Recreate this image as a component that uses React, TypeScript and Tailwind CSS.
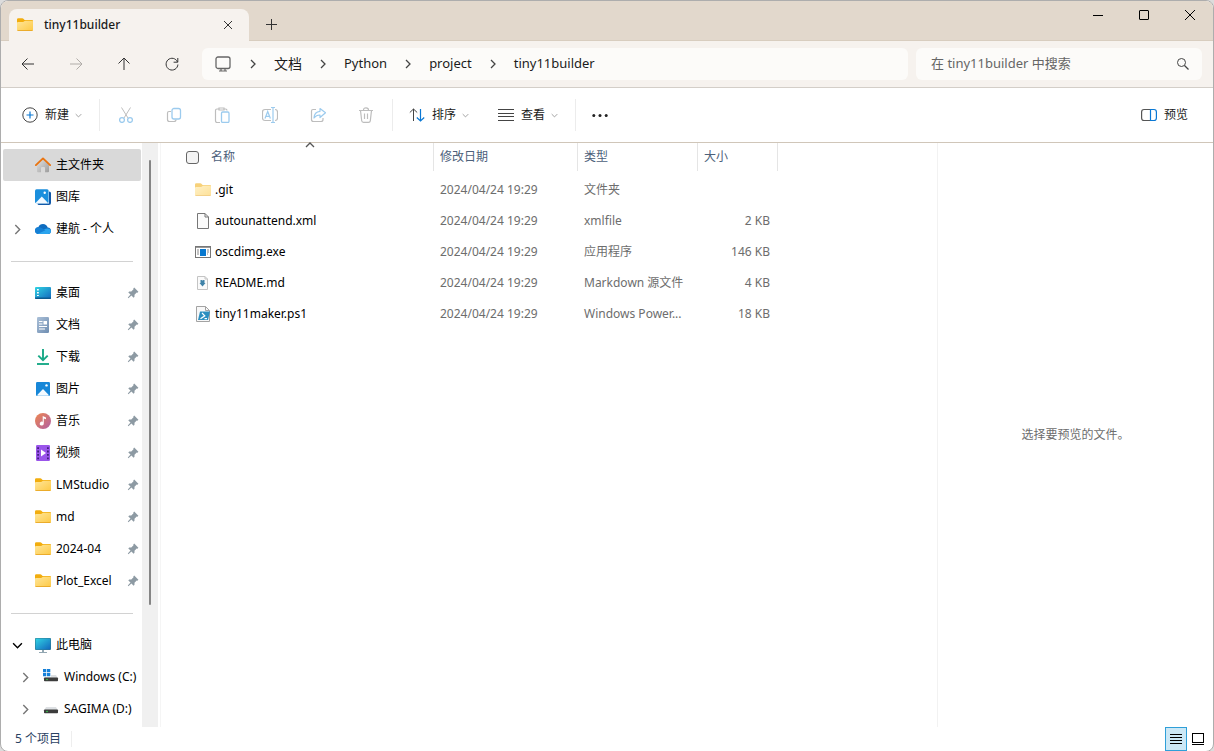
import type { ReactNode } from 'react';
import clsx from 'clsx';

interface IconProps {
  className?: string;
}

function Folder({ className }: IconProps) {
  return (
    <svg width="16" height="16" viewBox="0 0 16 16" className={className} aria-hidden="true">
      <defs>
        <linearGradient id="folderFront" x1="0" y1="0" x2="1" y2="1">
          <stop offset="0" stopColor="#ffe69a" />
          <stop offset="1" stopColor="#fdc945" />
        </linearGradient>
      </defs>
      <path d="M0 2.600Q0 1.300 1.300 1.300H5.400Q6 1.300 6.400 1.700L7.600 3H15Q16 3 16 4V7H0Z" fill="#f2ad0e" />
      <path d="M0 6Q0 5 1 5H6Q6.600 5 7 4.600L7.600 4Q8 3.700 8.500 3.700H15Q16 3.700 16 4.700V13Q16 14 15 14H1Q0 14 0 13Z" fill="url(#folderFront)" />
      <path d="M0.200 13.200Q0.400 14 1.200 14H14.800Q15.600 14 15.800 13.200Z" fill="#e5a01c" />
    </svg>
  );
}

function Home() {
  return (
    <svg width="16" height="16" viewBox="0 0 16 16" aria-hidden="true">
      <defs>
        <linearGradient id="homeWall" x1="0" y1="0" x2="1" y2="1">
          <stop offset="0" stopColor="#e4e4e4" />
          <stop offset="1" stopColor="#9c9c9c" />
        </linearGradient>
      </defs>
      <path d="M2 7.500 8 2 14 7.500V14.300Q14 15.300 13 15.300H10V11Q10 10 9 10H7Q6 10 6 11V15.300H3Q2 15.300 2 14.300Z" fill="url(#homeWall)" />
      <path d="M.9 8.100 8 1.400 15.100 8.100" fill="none" stroke="#ea7410" strokeWidth="1.900" strokeLinecap="round" strokeLinejoin="round" />
    </svg>
  );
}

function Gallery() {
  return (
    <svg width="16" height="16" viewBox="0 0 16 16" aria-hidden="true">
      <path d="M14 2.500Q16 2.500 16 4V14Q16 16 14 16H4Q2.500 16 2.500 14.500H14Z" fill="#1259a8" />
      <rect width="13.600" height="14" y=".3" rx="1.500" fill="#1b8fdd" />
      <path d="M.8 13.800 6.800 7.600 12.800 13.800Q12.500 14.300 12 14.300H1.500Q1 14.300.8 13.800Z" fill="#f2f9ff" />
      <circle cx="9.700" cy="3.800" r="1.200" fill="#fff" />
    </svg>
  );
}

function Cloud() {
  return (
    <svg width="16" height="16" viewBox="0 0 16 16" aria-hidden="true">
      <path d="M3.800 13Q0 13 0 9.600 0 6.500 3.300 6.200 4.600 3 8 3 11.500 3 12.700 6.500 16 6.900 16 9.900 16 13 12.800 13Z" fill="#0f6cbf" />
      <path d="M3.300 13 2.400 12.600 9.500 8.200Q11 7.300 12.600 7.500 15.900 7.900 16 10 15.800 13 12.800 13Z" fill="#2aa4ee" />
      <path d="M3.300 6.200Q5 6 6.500 7L10.500 9.300 2.600 12.900Q0 12.300 0 9.600 0 6.500 3.300 6.200Z" fill="#1580d5" />
    </svg>
  );
}

function Desktop() {
  return (
    <svg width="16" height="16" viewBox="0 0 16 16" aria-hidden="true">
      <defs>
        <linearGradient id="screenFill" x1="0" y1="0" x2="1" y2="1">
          <stop offset="0" stopColor="#31d3e3" />
          <stop offset="1" stopColor="#1267bd" />
        </linearGradient>
      </defs>
      <rect y="2" width="16" height="12" rx="1" fill="url(#screenFill)" />
      <path d="M0 12.500H16V13Q16 14 15 14H1Q0 14 0 13Z" fill="#0c5a8f" />
      <path d="M2 4H3.800V5.500H2ZM2 7H3.800V8.500H2ZM2 10H3.800V11H2Z" fill="#fff" />
    </svg>
  );
}

function DocumentIcon() {
  return (
    <svg width="16" height="16" viewBox="0 0 16 16" aria-hidden="true">
      <defs>
        <linearGradient id="docFill" x1="0" y1="0" x2="1" y2="1">
          <stop offset="0" stopColor="#abc0d8" />
          <stop offset="1" stopColor="#6e8db1" />
        </linearGradient>
      </defs>
      <rect x="2" width="12" height="16" rx="1.300" fill="url(#docFill)" />
      <path d="M4 4.500H7.500M4 7H7.500M4 9.500H12M4 12H10" stroke="#fff" strokeWidth="1.200" />
      <rect x="8.500" y="4" width="3.500" height="3.500" fill="#fff" />
    </svg>
  );
}

function Download() {
  return (
    <svg width="16" height="16" viewBox="0 0 16 16" fill="none" stroke="#19a987" strokeWidth="1.900" aria-hidden="true">
      <path d="M8 0V11M3.300 6.600 8 11.200 12.700 6.600" />
      <path d="M2 15H14" />
    </svg>
  );
}

function Pictures() {
  return (
    <svg width="16" height="16" viewBox="0 0 16 16" aria-hidden="true">
      <rect x="1" y="1" width="14" height="14" rx="1.200" fill="#1787d8" />
      <path d="M2 14.300 8 8 14 14.300Q13.800 14.700 13 14.700H3Q2.200 14.700 2 14.300Z" fill="#f4faff" />
      <circle cx="11.500" cy="4.400" r="1.200" fill="#fff" />
    </svg>
  );
}

function Music() {
  return (
    <svg width="16" height="16" viewBox="0 0 16 16" aria-hidden="true">
      <defs>
        <linearGradient id="musicFill" x1="0" y1="0" x2="1" y2="1">
          <stop offset="0" stopColor="#ee8750" />
          <stop offset="1" stopColor="#b05fa4" />
        </linearGradient>
      </defs>
      <circle cx="8" cy="8" r="8" fill="url(#musicFill)" />
      <path d="M7.700 3 11 4.400V6.300L8.800 5.500V10.600A2 2 0 1 1 7.700 8.800Z" fill="#fff" />
    </svg>
  );
}

function Video() {
  return (
    <svg width="16" height="16" viewBox="0 0 16 16" aria-hidden="true">
      <rect x="1" width="14" height="16" rx="1.200" fill="#9a55ea" />
      <path d="M2.200 2.200H4V4H2.200ZM2.200 5.600H4V7.400H2.200ZM2.200 9H4V10.800H2.200ZM2.200 12.400H4V14.200H2.200ZM12 2.200H13.800V4H12ZM12 5.600H13.800V7.400H12ZM12 9H13.800V10.800H12ZM12 12.400H13.800V14.200H12Z" fill="#41207c" />
      <path d="M6 4.600 11 8 6 11.400Z" fill="#fff" />
    </svg>
  );
}

function ThisPc() {
  return (
    <svg width="16" height="16" viewBox="0 0 16 16" aria-hidden="true">
      <rect y="1" width="16" height="12" rx="1" fill="#2e7890" />
      <rect x=".6" y="1.600" width="14.800" height="10.800" rx=".6" fill="url(#screenFill)" />
      <path d="M7 13H9V15H12V16H4V15H7Z" fill="#93a7b2" />
    </svg>
  );
}

function Drive({ system }: { system?: boolean }) {
  return (
    <svg width="16" height="16" viewBox="0 0 16 16" aria-hidden="true">
      <path d="M3 6H13L15 9.500H1Z" fill="#dde0e3" />
      <rect x="1" y="8.500" width="14" height="3.800" rx=".8" fill="#3c3c3c" />
      <circle cx="4" cy="10.500" r=".8" fill="#36d94a" />
      {system && (
        <>
          <path d="M0 0H8V8H0Z" fill="#fff" />
          <path d="M0 0H3.300V3.300H0ZM4 0H7.300V3.300H4ZM0 4H3.300V7.300H0ZM4 4H7.300V7.300H4Z" fill="#1580d8" />
        </>
      )}
    </svg>
  );
}

function Pin() {
  return (
    <svg width="12" height="12" viewBox="0 0 12 12" aria-hidden="true">
      <path d="M7.200.6 11.400 4.800 10.500 5.700 9.700 5.500 7.500 7.700V9.800L6.600 10.700 4.400 8.500 1.400 11.200.8 10.600 3.500 7.600 1.300 5.400 2.200 4.500H4.300L6.500 2.300 6.300 1.500Z" fill="#8d9aa3" />
    </svg>
  );
}

function XmlFile() {
  return (
    <svg width="16" height="16" viewBox="0 0 16 16" aria-hidden="true">
      <path d="M2.500.5H10L13.500 4V15.500H2.500Z" fill="#fbfbfb" stroke="#777" />
      <path d="M10 .5V4H13.500" fill="none" stroke="#777" />
    </svg>
  );
}

function ExeFile() {
  return (
    <svg width="16" height="16" viewBox="0 0 16 16" aria-hidden="true">
      <rect x=".5" y="2.500" width="15" height="11" fill="#fff" stroke="#777" />
      <path d="M0 3H16" stroke="#777" strokeWidth="1.500" />
      <rect x="5" y="5" width="6" height="7" fill="#0878cf" />
      <path d="M2 6H4M2 8H4M2 10H4M12 6H14M12 8H14M12 10H13" stroke="#888" />
    </svg>
  );
}

function MarkdownFile() {
  return (
    <svg width="16" height="16" viewBox="0 0 16 16" aria-hidden="true">
      <path d="M2.500 1.500H10L12.500 4V14.500H2.500Z" fill="#fafafa" stroke="#c4c4c4" />
      <path d="M10 1.500V4H12.500" fill="none" stroke="#c4c4c4" />
      <path d="M5.500 5H6.500L7.500 5.500 8.500 5H9.500V8H10.500L7.500 11.500 4.500 8H5.500Z" fill="#3f82a8" />
    </svg>
  );
}

function PowerShellFile() {
  return (
    <svg width="16" height="16" viewBox="0 0 16 16" aria-hidden="true">
      <path d="M1.500.5H10.500L14.500 4.500V15.500H1.500Z" fill="#f8f8f8" stroke="#a3a3a3" />
      <path d="M10.500.5V4.500H14.500" fill="none" stroke="#a3a3a3" />
      <path d="M5 5.500H15L13 14H3Z" fill="#2c8fc0" />
      <path d="M7 7 9.800 9.800 5.500 12.800M9.500 12.600H12" fill="none" stroke="#fff" strokeWidth="1.200" />
    </svg>
  );
}

function Chevron({ className, size = 10 }: IconProps & { size?: number }) {
  return (
    <svg width={size} height={size} viewBox="0 0 10 10" fill="none" stroke="currentColor" className={clsx('shrink-0', className)} aria-hidden="true">
      <path d="M3 1 7 5 3 9" strokeWidth="1.300" />
    </svg>
  );
}

// 16px line drawing used by the title bar, the address bar and the toolbar
function Line({ children, className }: IconProps & { children: ReactNode }) {
  return (
    <svg width="16" height="16" viewBox="0 0 16 16" fill="none" stroke="currentColor" className={clsx('shrink-0', className)} aria-hidden="true">
      {children}
    </svg>
  );
}

const GREY = '#bdbdbd';
const BLUE = '#9ccbee';

const navButtons = [
  { label: '后退', icon: <path d="M2 8H14M7.500 2.500 2 8 7.500 13.500" /> },
  { label: '前进', disabled: true, icon: <path d="M2 8H14M8.500 2.500 14 8 8.500 13.500" /> },
  { label: '向上', icon: <path d="M8 2V14M2.500 7.500 8 2 13.500 7.500" /> },
  { label: '刷新', icon: <path d="M13.500 6A5.900 5.900 0 1 0 13.900 8.500M13.800 2V6.200H9.600" /> },
];

const editButtons = [
  {
    label: '剪切',
    icon: (
      <>
        <path d="M3.500.5 10 11M12.500.5 6 11" stroke={GREY} />
        <circle cx="4" cy="13" r="2.400" stroke={BLUE} strokeWidth="1.300" />
        <circle cx="12" cy="13" r="2.400" stroke={BLUE} strokeWidth="1.300" />
      </>
    ),
  },
  {
    label: '复制',
    icon: (
      <>
        <path d="M5 4.500H3Q1.500 4.500 1.500 6V12.500Q1.500 14.500 3.500 14.500H8Q10 14.500 10 12.500" stroke={GREY} strokeWidth="1.200" />
        <rect x="6" y="1.500" width="8.500" height="10.500" rx="2" stroke={BLUE} strokeWidth="1.300" />
      </>
    ),
  },
  {
    label: '粘贴',
    icon: (
      <>
        <path d="M5 2H3Q1.500 2 1.500 3.500V13.500Q1.500 15.500 3 15.500H6M10 2H11.500Q13 2 13 3.500M5 1H10V3H5Z" stroke={GREY} strokeWidth="1.200" />
        <rect x="7.500" y="5" width="7.500" height="10.500" rx="1.200" stroke={BLUE} strokeWidth="1.300" />
      </>
    ),
  },
  {
    label: '重命名',
    icon: (
      <>
        <path d="M9 2.500H3Q.5 2.500.5 5V11Q.5 13.500 3 13.500H9M13 2.500Q15.500 2.500 15.500 5V11Q15.500 13.500 13 13.500" stroke={GREY} strokeWidth="1.200" />
        <path d="M3 11.500 5.700 4.500 8.400 11.500M4 9.300H7.500M11 .5V15.500M9 .5H13M9 15.500H13" stroke={BLUE} strokeWidth="1.200" />
      </>
    ),
  },
  {
    label: '共享',
    icon: (
      <>
        <path d="M6 2.500H3Q1.500 2.500 1.500 4V12.500Q1.500 14.500 3.500 14.500H11Q13 14.500 13 12.500V11" stroke={GREY} strokeWidth="1.200" />
        <path d="M10 1.500 15.500 5.800 10 10.500V8Q6.500 7.800 4 11 4.300 4.800 10 4.300Z" stroke={BLUE} strokeWidth="1.200" strokeLinejoin="round" />
      </>
    ),
  },
  {
    label: '删除',
    icon: (
      <path d="M1 3.500H15M5.500 3Q5.500.8 8 .8 10.500.8 10.500 3M2.500 3.500 3.700 13.800Q3.900 15.300 5.500 15.300H10.500Q12.100 15.300 12.300 13.800L13.500 3.500M6.500 6.500V12M9.500 6.500V12" stroke={GREY} strokeWidth="1.200" />
    ),
  },
];

const pinned = [
  { name: '桌面', icon: <Desktop /> },
  { name: '文档', icon: <DocumentIcon /> },
  { name: '下载', icon: <Download /> },
  { name: '图片', icon: <Pictures /> },
  { name: '音乐', icon: <Music /> },
  { name: '视频', icon: <Video /> },
  { name: 'LMStudio', icon: <Folder /> },
  { name: 'md', icon: <Folder /> },
  { name: '2024-04', icon: <Folder /> },
  { name: 'Plot_Excel', icon: <Folder /> },
];

const files = [
  { name: '.git', type: '文件夹', size: '', icon: <Folder className="opacity-55" /> },
  { name: 'autounattend.xml', type: 'xmlfile', size: '2 KB', icon: <XmlFile /> },
  { name: 'oscdimg.exe', type: '应用程序', size: '146 KB', icon: <ExeFile /> },
  { name: 'README.md', type: 'Markdown 源文件', size: '4 KB', icon: <MarkdownFile /> },
  { name: 'tiny11maker.ps1', type: 'Windows Power...', size: '18 KB', icon: <PowerShellFile /> },
];

interface SideItemProps {
  icon: ReactNode;
  children: ReactNode;
  expand?: 'closed' | 'open';
  nested?: boolean;
  active?: boolean;
  pin?: boolean;
}

function SideItem({ icon, children, expand, nested, active, pin }: SideItemProps) {
  return (
    <li>
      <a
        href="#"
        className={clsx(
          'flex h-8 items-center rounded-xs whitespace-nowrap text-black',
          nested && 'pl-2',
          active && 'bg-[#d9d9d9]',
        )}
      >
        <span className="w-8 shrink-0 pl-[9px]">
          {expand && <Chevron className={expand === 'open' ? 'rotate-90 text-black' : 'text-[#777]'} size={11} />}
        </span>
        {icon}
        <span className="ml-[5px]">{children}</span>
        {pin && (
          <span className="mr-[2px] ml-auto">
            <Pin />
          </span>
        )}
      </a>
    </li>
  );
}

function Divider() {
  return (
    <li className="flex h-8 items-center pr-2 pl-2" role="separator">
      <span className="h-px w-full bg-[#d2d2d2]" />
    </li>
  );
}

function TitleBar() {
  return (
    <header className="flex h-10 justify-between border-b border-[#d8cdbf] bg-[#e2d8cc]">
      <div className="flex items-end pl-2">
        <div className="-mb-px flex h-8 w-60 items-center rounded-t-lg bg-[#f6f2ee] pr-[13px] pl-2">
          <Folder />
          <span className="ml-[11px] flex-1 font-medium">tiny11builder</span>
          <button aria-label="关闭标签页" className="text-[#333]">
            <Line>
              <path d="M4 4 12 12M12 4 4 12" />
            </Line>
          </button>
        </div>
        <button aria-label="新建标签页" className="ml-3.5 flex h-8 items-center text-[#333]">
          <Line>
            <path d="M3 8.500H14M8.500 3V14" />
          </Line>
        </button>
      </div>
      <div className="flex h-7 text-black">
        <button aria-label="最小化" className="flex w-[46px] items-center justify-center">
          <Line>
            <path d="M3 8.500H13" />
          </Line>
        </button>
        <button aria-label="最大化" className="flex w-[46px] items-center justify-center">
          <Line>
            <rect x="3.500" y="3.500" width="9" height="9" rx=".5" />
          </Line>
        </button>
        <button aria-label="关闭" className="flex w-[46px] items-center justify-center">
          <Line>
            <path d="M3 3 13 13M13 3 3 13" />
          </Line>
        </button>
      </div>
    </header>
  );
}

function AddressBar() {
  return (
    <div className="flex h-[47px] items-center border-b border-[#d3cec8] bg-[#f6f2ee] pr-[11px] pl-[3px]">
      {navButtons.map((b) => (
        <button key={b.label} aria-label={b.label} disabled={b.disabled} className="flex h-8 w-12 shrink-0 items-center justify-center text-[#333] disabled:text-[#b0aca8]">
          <Line>{b.icon}</Line>
        </button>
      ))}
      <nav aria-label="地址" className="ml-1.5 flex h-8 flex-1 items-center gap-4 rounded-md bg-[#fcfbf9] px-[13px] text-[13px]">
        <button aria-label="此电脑" className="mr-px">
          <Line className="text-[#666]">
            <rect x="1" y="1" width="14" height="11.500" rx="2" strokeWidth="1.300" />
            <path d="M6 12.500V15M10 12.500V15M4 15H12" strokeWidth="1.200" />
          </Line>
        </button>
        <Chevron className="text-[#444]" />
        <button className="text-sm">文档</button>
        <Chevron className="text-[#444]" />
        <button>Python</button>
        <Chevron className="text-[#444]" />
        <button>project</button>
        <Chevron className="text-[#444]" />
        <button>tiny11builder</button>
      </nav>
      <label className="ml-2 flex h-8 w-[286px] items-center rounded-md bg-[#fcfbf9] pr-[11px] pl-[15px] text-[13px]">
        <input type="search" aria-label="搜索" placeholder="在 tiny11builder 中搜索" className="min-w-0 flex-1 bg-transparent outline-none placeholder:text-[#666]" />
        <Line className="text-[#444]">
          <circle cx="6.500" cy="6.500" r="4" />
          <path d="M9.500 9.500 13.500 13.500" strokeWidth="1.300" />
        </Line>
      </label>
    </div>
  );
}

function Toolbar() {
  return (
    <div className="flex h-[55px] items-center border-b border-[#d0c6b9] bg-white pr-[25px] pl-[21px]">
      <button className="flex items-center">
        <Line className="text-[#444]">
          <circle cx="8" cy="8" r="7.200" />
          <path d="M4.500 8H11.500M8 4.500V11.500" stroke="#0a78d4" strokeWidth="1.200" />
        </Line>
        <span className="ml-[7px]">新建</span>
        <Chevron className="ml-1.5 rotate-90 text-[#999]" size={7} />
      </button>
      <span className="ml-[17px] h-8 w-px bg-[#ececec]" />
      <div className="mr-[2px] ml-[2px] flex">
        {editButtons.map((b) => (
          <button key={b.label} aria-label={b.label} disabled className="flex h-8 w-12 items-center justify-center">
            <Line>{b.icon}</Line>
          </button>
        ))}
      </div>
      <span className="h-8 w-px bg-[#ececec]" />
      <button className="ml-4 flex items-center">
        <Line>
          <path d="M4.500 14V2M.8 5.500 4.500 2 8.200 5.500" stroke="#444" />
          <path d="M11.500 2V14M7.800 10.500 11.500 14 15.200 10.500" stroke="#0a78d4" strokeWidth="1.200" />
        </Line>
        <span className="ml-[7px]">排序</span>
        <Chevron className="ml-1.5 rotate-90 text-[#999]" size={7} />
      </button>
      <button className="ml-[29px] flex items-center">
        <Line className="text-[#444]">
          <path d="M0 2.500H16M0 6.500H16M0 9.500H16M0 13.500H16" />
        </Line>
        <span className="ml-[7px]">查看</span>
        <Chevron className="ml-1.5 rotate-90 text-[#999]" size={7} />
      </button>
      <span className="ml-[17px] h-8 w-px bg-[#ececec]" />
      <button aria-label="更多" className="ml-4">
        <Line>
          <g fill="#222" stroke="none">
            <circle cx="1.800" cy="8.500" r="1.500" />
            <circle cx="8" cy="8.500" r="1.500" />
            <circle cx="14.200" cy="8.500" r="1.500" />
          </g>
        </Line>
      </button>
      <button className="ml-auto flex items-center">
        <Line>
          <path d="M9.500 2.500H3Q.6 2.500.6 5V11Q.6 13.500 3 13.500H9.500" stroke="#555" strokeWidth="1.200" />
          <path d="M9.500 2.500H13Q15.400 2.500 15.400 5V11Q15.400 13.500 13 13.500H9.500Z" stroke="#0a78d4" strokeWidth="1.200" />
        </Line>
        <span className="ml-[7px]">预览</span>
      </button>
    </div>
  );
}

function Sidebar() {
  return (
    <aside className="flex shrink-0">
      <ul className="w-[141px] pt-1.5 pr-px pb-0.5 pl-0.5">
        <SideItem icon={<Home />} active>主文件夹</SideItem>
        <SideItem icon={<Gallery />}>图库</SideItem>
        <SideItem icon={<Cloud />} expand="closed">建航 - 个人</SideItem>
        <Divider />
        {pinned.map((p) => (
          <SideItem key={p.name} icon={p.icon} pin>{p.name}</SideItem>
        ))}
        <Divider />
        <SideItem icon={<ThisPc />} expand="open">此电脑</SideItem>
        <SideItem icon={<Drive system />} expand="closed" nested>Windows (C:)</SideItem>
        <SideItem icon={<Drive />} expand="closed" nested>SAGIMA (D:)</SideItem>
      </ul>
      <div className="flex w-4 flex-col items-center bg-[#f0f0f0]">
        <span className="flex-[17]" />
        <span className="w-0.5 flex-[445] rounded-full bg-[#858585]" />
        <span className="flex-[122]" />
      </div>
    </aside>
  );
}

function FileTable() {
  const head = 'flex h-7 items-center border-[#e5e5e5] font-normal';
  return (
    <table className="w-[617px] table-fixed border-collapse text-left">
      <colgroup>
        <col className="w-[272px]" />
        <col className="w-36" />
        <col className="w-[120px]" />
        <col className="w-[81px]" />
      </colgroup>
      <thead className="text-[#4c607a]">
        <tr className="h-[31px] align-top">
          <th className="relative p-0">
            <div className={clsx(head, 'gap-3 pl-[25px]')}>
              <input type="checkbox" aria-label="全选" className="size-[13px] appearance-none rounded-[3px] border border-[#666] bg-[#f4f4f4]" />
              名称
            </div>
            <Chevron className="absolute -top-[3px] left-36 -rotate-90 text-[#555]" />
          </th>
          <th className="p-0"><div className={clsx(head, 'border-l pl-1.5')}>修改日期</div></th>
          <th className="p-0"><div className={clsx(head, 'border-l pl-1.5')}>类型</div></th>
          <th className="p-0"><div className={clsx(head, 'border-x pl-1.5')}>大小</div></th>
        </tr>
      </thead>
      <tbody className="text-[#6d6d6d]">
        {files.map((f) => (
          <tr key={f.name} className="h-[31px] whitespace-nowrap">
            <td className="p-0">
              <div className="flex items-center gap-1 pl-[34px] text-black">
                {f.icon}
                {f.name}
              </div>
            </td>
            <td className="p-0 pl-[7px]">2024/04/24 19:29</td>
            <td className="p-0 pl-[7px]">{f.type}</td>
            <td className="p-0 pr-2 text-right">{f.size}</td>
          </tr>
        ))}
      </tbody>
    </table>
  );
}

function StatusBar() {
  return (
    <footer className="flex h-6 items-center justify-between pr-1 pl-3.5 text-[#2b4263]">
      <span className="border-r border-[#eee] pr-2.5">5 个项目</span>
      <div className="flex h-full text-black">
        <button aria-label="详细信息" className="flex w-[22px] items-center justify-center border border-[#2f9fd8] bg-[#cce8f6]">
          <Line>
            <path d="M2 3.500H14M2 6.500H14M2 9.500H14M2 12.500H14" />
          </Line>
        </button>
        <button aria-label="大缩略图" className="flex w-[22px] items-center justify-center">
          <Line>
            <rect x="2.500" y="2.500" width="11" height="9" />
            <path d="M2 13.500H14" />
          </Line>
        </button>
      </div>
    </footer>
  );
}

export default function App() {
  return (
    <div className="min-h-screen bg-[#dcdcdc]">
      <div className="flex min-h-screen flex-col overflow-hidden rounded-lg border border-[#adadad] bg-white font-['Noto_Sans','Noto_Sans_CJK_SC',sans-serif] text-xs text-[#1b1b1b]">
        <TitleBar />
        <AddressBar />
        <Toolbar />
        <div className="flex flex-1">
          <Sidebar />
          <main className="ml-0.5 flex-1 border-l border-[#f5f5f5]">
            <FileTable />
          </main>
          <aside className="flex w-[276px] items-center justify-center border-l border-[#f2f2f2] text-[#6d6d6d]">
            选择要预览的文件。
          </aside>
        </div>
        <StatusBar />
      </div>
    </div>
  );
}
